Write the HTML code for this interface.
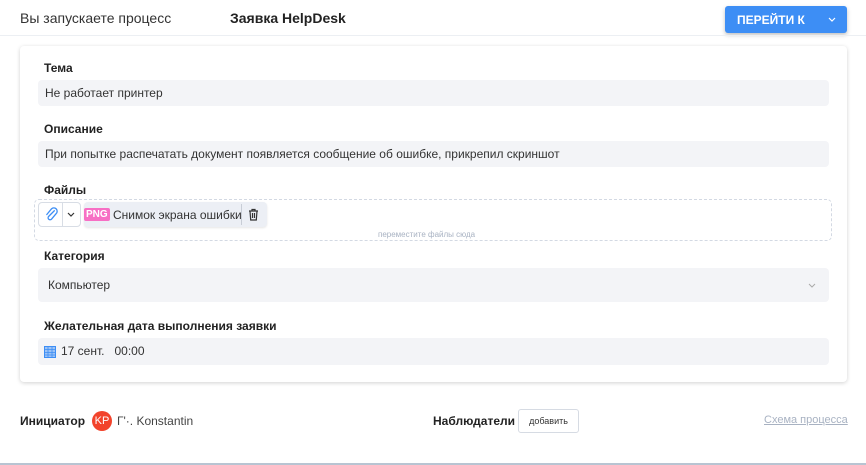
<!DOCTYPE html><html><head><meta charset="utf-8"><style>
body{margin:0;width:866px;height:465px;background:#fff;font-family:"Liberation Sans",sans-serif;position:relative;overflow:hidden;color:#222}
.a{position:absolute}
.lbl{position:absolute;left:44px;font-size:12px;font-weight:bold;color:#222}
.inp{position:absolute;left:38px;width:791px;background:#f3f4f7;border-radius:4px;font-size:12px;color:#333;box-sizing:border-box;padding-left:7px}
</style></head><body>
<div class="a" style="left:20px;top:10px;font-size:14px;color:#333">Вы запускаете процесс</div>
<div class="a" style="left:230px;top:10px;font-size:14px;font-weight:bold;color:#222">Заявка HelpDesk</div>
<div class="a" style="left:725px;top:6px;width:122px;height:27px;background:#3d8ef5;border-radius:3px;box-shadow:0 2px 4px rgba(0,0,0,.25);color:#fff;font-size:12px;font-weight:bold">
<span class="a" style="left:12px;top:7px">ПЕРЕЙТИ К</span>
<svg class="a" style="left:103px;top:11px" width="8" height="5" viewBox="0 0 8 5"><path d="M1 1l3 3 3-3" fill="none" stroke="#fff" stroke-width="1.2"/></svg></div>
<div class="a" style="left:0;top:35px;width:866px;height:1px;background:#eceff3"></div>
<div class="a" style="left:20px;top:46px;width:827px;height:336px;border-radius:4px;box-shadow:0 1px 4px rgba(0,0,0,.18);background:#fff"></div>
<div class="lbl" style="top:61px">Тема</div>
<div class="inp" style="top:80px;height:26px;line-height:26px">Не работает принтер</div>
<div class="lbl" style="top:122px">Описание</div>
<div class="inp" style="top:141px;height:26px;line-height:26px">При попытке распечатать документ появляется сообщение об ошибке, прикрепил скриншот</div>
<div class="lbl" style="top:183px">Файлы</div>
<div class="a" style="left:34px;top:199px;width:798px;height:42px;border:1px dashed #d3d9e3;border-radius:5px;box-sizing:border-box"></div>
<div class="a" style="left:38px;top:202px;width:43px;height:25px;border:1px solid #d8dde5;border-radius:4px;box-sizing:border-box;background:#fff">
<div class="a" style="left:23px;top:0;width:1px;height:23px;background:#d8dde5"></div>
<svg class="a" style="left:5px;top:4px" width="15" height="15" viewBox="0 0 16 16"><path d="M11 4 L5 10 a2 2 0 0 0 3 3 L13 7 a3.5 3.5 0 0 0 -5 -5 L3 8" fill="none" stroke="#3d8ef5" stroke-width="1.4" stroke-linecap="round"/></svg>
<svg class="a" style="left:28px;top:9px" width="8" height="5" viewBox="0 0 8 5"><path d="M1 1l3 3 3-3" fill="none" stroke="#333" stroke-width="1.2"/></svg></div>
<div class="a" style="left:84px;top:202px;width:183px;height:25px;background:#eceff5;border-radius:4px;box-shadow:0 1px 2px rgba(0,0,0,.1)">
<span class="a" style="left:0;top:6px;background:#f76fc4;color:#fff;font-size:10px;font-weight:bold;padding:0 2px;border-radius:2px;line-height:13px">PNG</span>
<span class="a" style="left:29px;top:6px;font-size:12px;color:#333">Снимок экрана ошибки</span>
<div class="a" style="left:157px;top:2px;width:1px;height:21px;background:#c8cdd6"></div>
<svg class="a" style="left:164px;top:6px" width="11" height="13" viewBox="0 0 11 13"><path d="M1 3h9M4 3V1.5h3V3M2 3l.7 9h5.6L9 3M4.5 5v5M6.5 5v5" fill="none" stroke="#333" stroke-width="1.2"/></svg></div>
<div class="a" style="left:378px;top:230px;font-size:8px;color:#a8b2c2">переместите файлы сюда</div>
<div class="lbl" style="top:249px">Категория</div>
<div class="inp" style="top:268px;height:34px;line-height:34px;padding-left:10px">Компьютер
<svg class="a" style="right:13px;top:15px" width="8" height="5" viewBox="0 0 8 5"><path d="M1 1l3 3 3-3" fill="none" stroke="#aaa" stroke-width="1"/></svg></div>
<div class="lbl" style="top:319px">Желательная дата выполнения заявки</div>
<div class="inp" style="top:338px;height:27px;line-height:27px;padding-left:23px">17 сент.&nbsp;&nbsp;&nbsp;00:00
<svg class="a" style="left:6px;top:7px" width="12" height="13" viewBox="0 0 12 13"><rect x="0.5" y="1.5" width="11" height="11" fill="#9cc3f7" stroke="#3d8ef5"/><path d="M0.5 4.5h11M0.5 7.5h11M0.5 10h11M4 1.5v11M8 1.5v11" stroke="#3d8ef5" stroke-width=".8"/></svg></div>
<div class="a" style="left:20px;top:414px;font-size:12px;font-weight:bold">Инициатор</div>
<div class="a" style="left:92px;top:411px;width:20px;height:20px;border-radius:50%;background:#f2432b;color:#fff;font-size:11px;line-height:20px;text-align:center">KP</div>
<div class="a" style="left:117px;top:414px;font-size:12px;color:#444">Г'·. Konstantin</div>
<div class="a" style="left:433px;top:414px;font-size:12px;font-weight:bold">Наблюдатели</div>
<div class="a" style="left:518px;top:409px;width:61px;height:24px;border:1px solid #d6dbe3;border-radius:3px;box-sizing:border-box;font-size:9px;line-height:22px;text-align:center;color:#333">добавить</div>
<div class="a" style="left:764px;top:414px;font-size:11px;color:#a8b2c2;text-decoration:underline">Схема процесса</div>
<div class="a" style="left:0;top:463px;width:866px;height:2px;background:#b8c4d2"></div>
</body></html>
